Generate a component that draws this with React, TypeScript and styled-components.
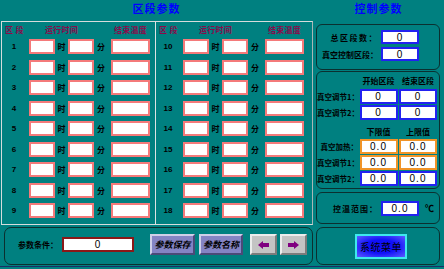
import styled, { createGlobalStyle } from "styled-components";

const GlobalStyle = createGlobalStyle`
  html, body {
    margin: 0;
    padding: 0;
    background: #008080;
  }
  body {
    font-family: "Noto Sans CJK SC", "Noto Sans", sans-serif;
  }
`;

type Tone = "pink" | "blue" | "orange" | "maroon";

const toneColor: Record<Tone, string> = {
  pink: "#f47a7a",
  blue: "#2222f0",
  orange: "#f09428",
  maroon: "#8a1818",
};

const Screen = styled.div`
  width: 444px;
  height: 269px;
  overflow: hidden;
  background: #008080;
  display: grid;
  grid-template-columns: 313px 131px;
  grid-template-rows: 21px 205px 40px 1px;
`;

const Title = styled.div`
  display: flex;
  justify-content: center;
  padding-top: 2px;
  line-height: 13px;
  font-size: 11px;
  font-weight: 700;
  letter-spacing: 1px;
  color: #0000ff;
`;

/* ---------- left: section parameters ---------- */

const SectionPanel = styled.div`
  margin-left: 1px;
  height: 204px;
  box-sizing: border-box;
  border: 1px solid #d6dcdc;
  border-right-color: #a9b6b6;
  display: grid;
  grid-template-columns: 154px 1fr;
`;

const SectionColumn = styled.div<{ $divider?: boolean }>`
  border-right: ${(p) => (p.$divider ? "1px solid #dde3e3" : "none")};
  display: flex;
  flex-direction: column;
`;

const rowTemplate = "27px 26px 13px 26px 17px 39px";

const HeadRow = styled.div`
  height: 15px;
  margin-bottom: 2px;
  display: grid;
  grid-template-columns: ${rowTemplate};
  align-items: center;
  font-size: 8px;
  font-weight: 700;
  color: #8a0a4a;
`;

const HeadCell = styled.span<{ $col: string; $align?: string }>`
  grid-column: ${(p) => p.$col};
  text-align: ${(p) => p.$align ?? "center"};
  padding-left: ${(p) => (p.$align === "left" ? "3px" : "0")};
  white-space: nowrap;
  letter-spacing: 0.3px;
`;

const RowList = styled.div`
  display: flex;
  flex-direction: column;
  gap: 5.5px;
`;

const Row = styled.div`
  height: 15px;
  display: grid;
  grid-template-columns: ${rowTemplate};
  align-items: center;
`;

const RowNo = styled.span`
  font-family: "Liberation Sans", Arial, sans-serif;
  font-size: 8px;
  font-weight: 700;
  color: #000;
  text-align: center;
  padding-right: 3px;
`;

const Unit = styled.span<{ $left?: boolean }>`
  font-size: 8px;
  font-weight: 700;
  color: #000;
  text-align: ${(p) => (p.$left ? "left" : "center")};
  padding-left: ${(p) => (p.$left ? "3px" : "0")};
`;

const Field = styled.div<{ $tone: Tone; $h?: number }>`
  height: ${(p) => p.$h ?? 15}px;
  box-sizing: border-box;
  background: #ffffff;
  border: 2px solid ${(p) => toneColor[p.$tone]};
  display: flex;
  align-items: center;
  justify-content: center;
  font-family: "Liberation Sans", Arial, sans-serif;
  font-size: 10px;
  color: #000;
  letter-spacing: 1px;
`;

/* ---------- right: control parameters ---------- */

const ControlColumn = styled.div`
  padding: 3px 4px 0 3px;
  display: flex;
  flex-direction: column;
`;

const RoundBox = styled.div<{ $h: number; $mt?: number }>`
  height: ${(p) => p.$h}px;
  margin-top: ${(p) => p.$mt ?? 0}px;
  box-sizing: border-box;
  border: 1px solid #0b3030;
  border-radius: 6px;
`;

const CountGrid = styled.div`
  padding-top: 5px;
  display: grid;
  grid-template-columns: 61px 38px;
  grid-auto-rows: 14px;
  column-gap: 3px;
  row-gap: 3px;
  align-items: center;
`;

const Label = styled.span<{ $spacing?: number; $size?: number }>`
  font-size: ${(p) => p.$size ?? 8}px;
  font-weight: 700;
  color: #000;
  text-align: right;
  white-space: nowrap;
  letter-spacing: ${(p) => p.$spacing ?? 0}px;
`;

const RangeList = styled.div`
  display: flex;
  flex-direction: column;
  gap: 1px;
`;

const rangeTemplate = "41px 38px 38px";

const RangeHead = styled.div<{ $h: number; $pt?: number }>`
  height: ${(p) => p.$h}px;
  padding-top: ${(p) => p.$pt ?? 0}px;
  box-sizing: border-box;
  display: grid;
  grid-template-columns: ${rangeTemplate};
  column-gap: 1.5px;
  align-items: center;
  font-size: 8px;
  font-weight: 700;
  color: #000;
  text-align: center;
  white-space: nowrap;
`;

const RangeRow = styled.div`
  height: 15px;
  display: grid;
  grid-template-columns: ${rangeTemplate};
  column-gap: 1.5px;
  align-items: center;
`;

const TempRow = styled.div`
  height: 100%;
  display: grid;
  grid-template-columns: 61px 38px auto;
  column-gap: 3px;
  align-items: center;
`;

const Degree = styled.span`
  margin-left: 3px;
  font-size: 9px;
  font-weight: 700;
  color: #000;
`;

/* ---------- bottom ---------- */

const BottomBox = styled.div`
  margin: 1px 0 1px 4px;
  box-sizing: border-box;
  border: 1px solid #0b3030;
  border-radius: 7px;
  padding: 5px 0 8px 13px;
  display: flex;
  align-items: center;
`;

const Caption = styled.span`
  width: 44px;
  font-size: 8px;
  font-weight: 700;
  color: #000;
  white-space: nowrap;
`;

const Bevel = styled.button`
  height: 21px;
  box-sizing: border-box;
  padding: 0;
  border: 2px solid;
  display: flex;
  align-items: center;
  justify-content: center;
  font-family: "Noto Sans CJK SC", sans-serif;
`;

const PurpleButton = styled(Bevel)<{ $w: number; $ml: number }>`
  width: ${(p) => p.$w}px;
  margin-left: ${(p) => p.$ml}px;
  background: #8484c4;
  border-color: #cfcfe8 #4a4a78 #4a4a78 #cfcfe8;
  font-size: 9px;
  font-weight: 700;
  font-style: italic;
  color: #000;
`;

const ArrowButton = styled(Bevel)<{ $ml: number }>`
  width: 27px;
  margin-left: ${(p) => p.$ml}px;
  background: #c4c4c4;
  border-color: #ececec #7c7c7c #7c7c7c #ececec;
`;

const MenuBox = styled.div`
  margin: 1px 4px 1px 3px;
  box-sizing: border-box;
  border: 1px solid #0b3030;
  border-radius: 7px;
  padding-left: 6px;
  display: flex;
  align-items: center;
  justify-content: center;
`;

const MenuButton = styled.button`
  width: 52px;
  height: 25px;
  box-sizing: border-box;
  padding: 0;
  border: 2px solid #3ee8ee;
  background: radial-gradient(ellipse at center, #1010f8 45%, #5c5cff 100%);
  font-family: "Noto Sans CJK SC", sans-serif;
  font-size: 10px;
  color: #000;
  letter-spacing: 0.5px;
`;

const Rule = styled.div`
  grid-column: 1 / -1;
  background: #1a2d66;
`;

const Arrow = ({ dir }: { dir: "left" | "right" }) => (
  <svg width="11" height="8" viewBox="0 0 11 8">
    <polygon
      points="0,4 5,0 5,2 11,2 11,6 5,6 5,8"
      fill="#800080"
      transform={dir === "right" ? "matrix(-1 0 0 1 11 0)" : undefined}
    />
  </svg>
);

const Section = ({ start, divider }: { start: number; divider?: boolean }) => (
  <SectionColumn $divider={divider}>
    <HeadRow>
      <HeadCell $col="1" $align="left">区 段</HeadCell>
      <HeadCell $col="2 / span 3">运行时间</HeadCell>
      <HeadCell $col="6">结束温度</HeadCell>
    </HeadRow>
    <RowList>
      {Array.from({ length: 9 }, (_, i) => (
        <Row key={i}>
          <RowNo>{start + i}</RowNo>
          <Field $tone="pink" />
          <Unit>时</Unit>
          <Field $tone="pink" />
          <Unit $left>分</Unit>
          <Field $tone="pink" />
        </Row>
      ))}
    </RowList>
  </SectionColumn>
);

export default function App() {
  return (
    <>
      <GlobalStyle />
      <Screen>
        <Title>区段参数</Title>
        <Title>控制参数</Title>

        <SectionPanel>
          <Section start={1} divider />
          <Section start={10} />
        </SectionPanel>

        <ControlColumn>
          <RoundBox $h={46}>
            <CountGrid>
              <Label $spacing={1.5}>总区段数：</Label>
              <Field $tone="blue" $h={14}>0</Field>
              <Label>真空控制区段：</Label>
              <Field $tone="blue" $h={14}>0</Field>
            </CountGrid>
          </RoundBox>

          <RoundBox $h={118} $mt={1}>
            <RangeList>
              <RangeHead $h={16}>
                <span />
                <span>开始区段</span>
                <span>结束区段</span>
              </RangeHead>
              <RangeRow>
                <Label $size={7.5}>真空调节1：</Label>
                <Field $tone="blue">0</Field>
                <Field $tone="blue">0</Field>
              </RangeRow>
              <RangeRow>
                <Label $size={7.5}>真空调节2：</Label>
                <Field $tone="blue">0</Field>
                <Field $tone="blue">0</Field>
              </RangeRow>
              <RangeHead $h={17} $pt={3}>
                <span />
                <span>下限值</span>
                <span>上限值</span>
              </RangeHead>
              <RangeRow>
                <Label $size={7.5}>真空加热：</Label>
                <Field $tone="orange">0.0</Field>
                <Field $tone="orange">0.0</Field>
              </RangeRow>
              <RangeRow>
                <Label $size={7.5}>真空调节1：</Label>
                <Field $tone="orange">0.0</Field>
                <Field $tone="orange">0.0</Field>
              </RangeRow>
              <RangeRow>
                <Label $size={7.5}>真空调节2：</Label>
                <Field $tone="blue">0.0</Field>
                <Field $tone="blue">0.0</Field>
              </RangeRow>
            </RangeList>
          </RoundBox>

          <RoundBox $h={32} $mt={3}>
            <TempRow>
              <Label $spacing={1}>控温范围：</Label>
              <Field $tone="blue">0.0</Field>
              <Degree>℃</Degree>
            </TempRow>
          </RoundBox>
        </ControlColumn>

        <BottomBox>
          <Caption>参数条件：</Caption>
          <Field $tone="maroon" style={{ width: 72 }}>0</Field>
          <PurpleButton $w={45} $ml={16}>参数保存</PurpleButton>
          <PurpleButton $w={44} $ml={4}>参数名称</PurpleButton>
          <ArrowButton $ml={7}>
            <Arrow dir="left" />
          </ArrowButton>
          <ArrowButton $ml={3}>
            <Arrow dir="right" />
          </ArrowButton>
        </BottomBox>

        <MenuBox>
          <MenuButton>系统菜单</MenuButton>
        </MenuBox>

        <Rule />
      </Screen>
    </>
  );
}
